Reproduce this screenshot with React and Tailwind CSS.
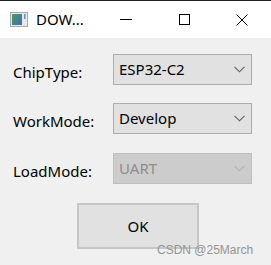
import React from "react";

const Chevron = ({ color }) => (
  <svg width="11" height="7" viewBox="0 0 11 7" className="shrink-0">
    <path d="M0.5 0.8 L5.5 5.8 L10.5 0.8" fill="none" stroke={color} strokeWidth="1.1" />
  </svg>
);

const Combo = ({ value, disabled }) => (
  <div
    className={`flex items-center justify-between w-[139px] h-[31px] pl-[5px] pr-[6px] border ${
      disabled ? "bg-[#cccccc] border-[#bfbfbf] text-[#8d8d8d]" : "bg-[#e1e1e1] border-[#adadad] text-black"
    }`}
  >
    <span className="text-[15px] leading-none">{value}</span>
    <Chevron color={disabled ? "#b3b3b3" : "#606060"} />
  </div>
);

const Row = ({ label, value, disabled, className }) => (
  <div className={`flex items-center ${className}`}>
    <span className="w-[100px] text-[15px] leading-none text-black pt-[5px]">{label}</span>
    <Combo value={value} disabled={disabled} />
  </div>
);

export default function App() {
  return (
    <div
      className="relative w-[271px] h-[265px] bg-[#f0f0f0] flex flex-col overflow-hidden"
      style={{ fontFamily: '"Noto Sans", "Open Sans", sans-serif' }}
    >
      {/* title bar */}
      <div className="h-[38px] bg-white border-t border-[#1f1f1f] flex items-center shrink-0">
        <svg width="18" height="15" viewBox="0 0 18 15" className="ml-[10px]">
          <defs>
            <linearGradient id="ig" x1="0" y1="0" x2="1" y2="1">
              <stop offset="0" stopColor="#4f9a5e" />
              <stop offset="1" stopColor="#3a6fb8" />
            </linearGradient>
          </defs>
          <rect x="0.5" y="0.5" width="17" height="14" fill="#e8e8e8" stroke="#a9a9a9" />
          <rect x="2" y="2" width="10" height="11" fill="url(#ig)" />
          <rect x="14" y="2" width="1.5" height="5" fill="#5a8fd0" />
        </svg>
        <span className="ml-[8px] text-[15px] text-black leading-none">DOW...</span>
        <div className="ml-auto flex items-center">
          <div className="w-[58px] flex justify-center">
            <div className="w-[12px] h-px bg-black" />
          </div>
          <div className="w-[58px] flex justify-center">
            <div className="w-[11px] h-[11px] border border-black" />
          </div>
          <div className="w-[58px] flex justify-center">
            <svg width="12" height="12" viewBox="0 0 12 12">
              <path d="M0.5 0.5 L11.5 11.5 M11.5 0.5 L0.5 11.5" stroke="#000" strokeWidth="1" />
            </svg>
          </div>
        </div>
      </div>

      {/* body */}
      <div className="flex flex-col pl-[13px] pt-[16px]">
        <Row label="ChipType:" value="ESP32-C2" />
        <Row label="WorkMode:" value="Develop" className="mt-[18px]" />
        <Row label="LoadMode:" value="UART" disabled className="mt-[19px]" />
        <div className="mt-[19px] ml-[64px] w-[122px] h-[46px] bg-[#e1e1e1] border-2 border-[#c6c6c6] flex items-center justify-center">
          <span className="text-[15px] text-black leading-none">OK</span>
        </div>
      </div>

      <span
        className="absolute left-[157px] top-[244px] text-[12px] leading-none text-[#959595]"
        style={{ fontFamily: '"Liberation Sans", Arial, sans-serif' }}
      >
        CSDN @25March
      </span>
    </div>
  );
}
